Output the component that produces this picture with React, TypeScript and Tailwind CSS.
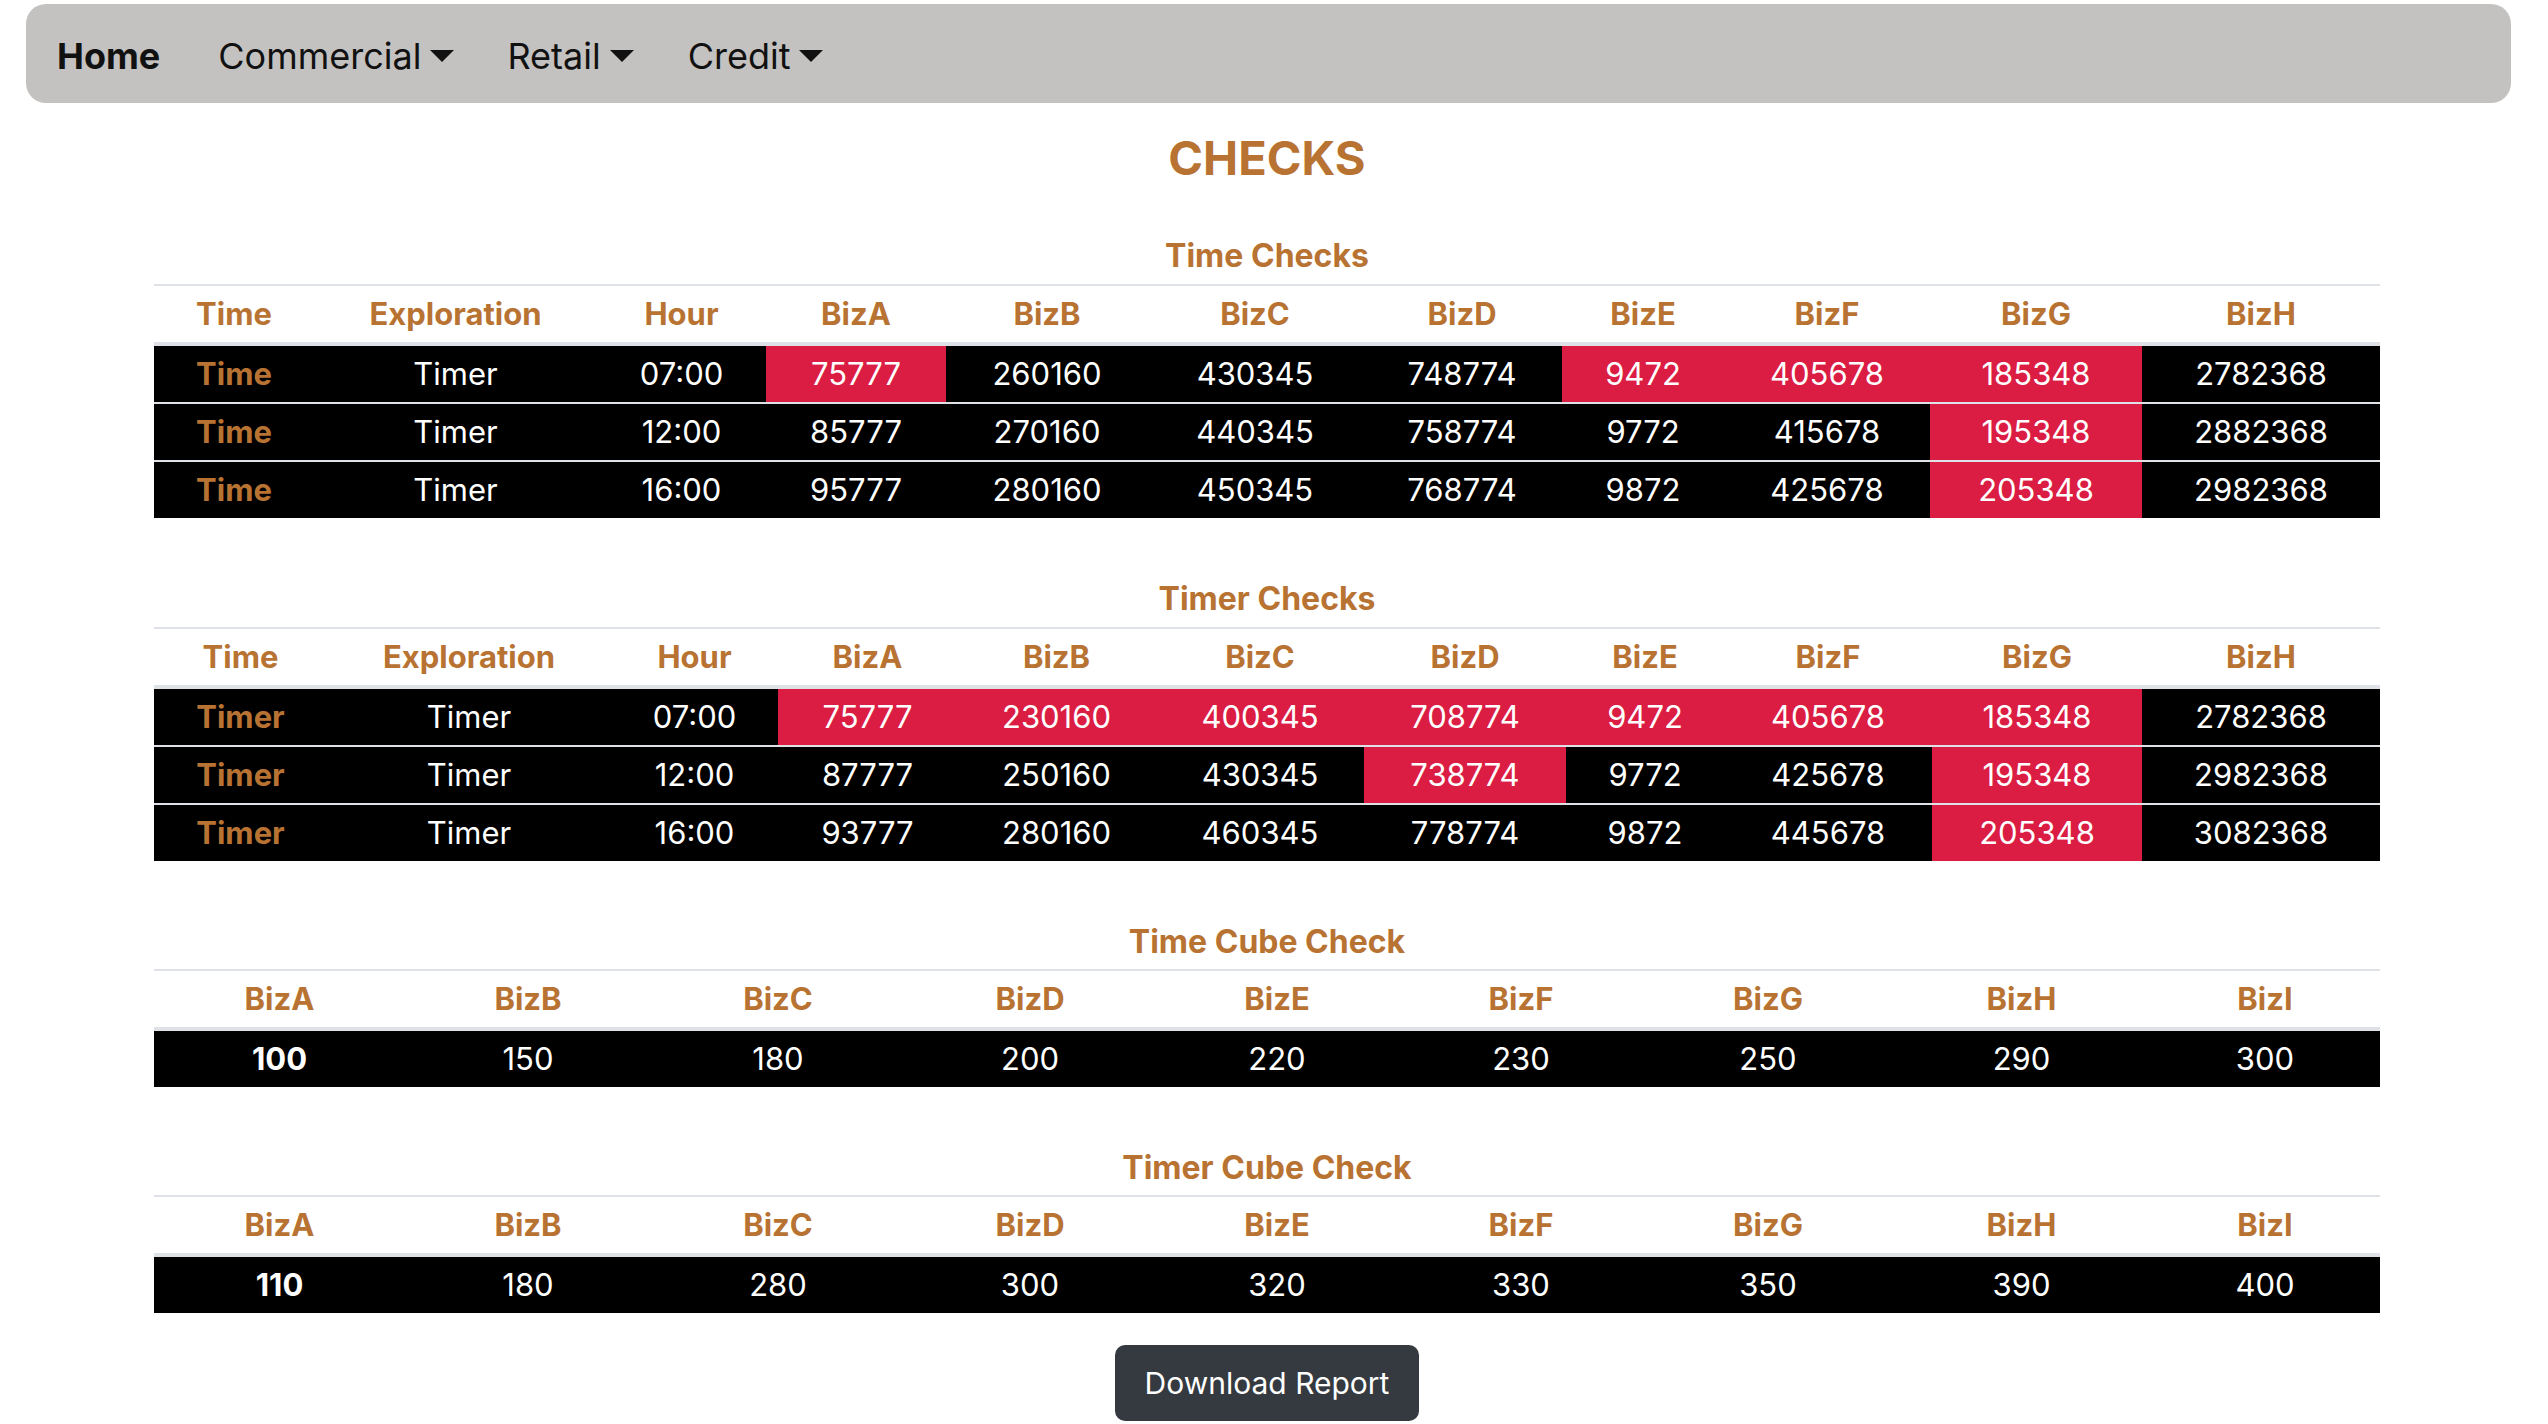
import React from 'react';

const COPPER = 'text-[#b87333]';

type Cell = { v: string; red?: boolean };

const timeChecks: Cell[][] = [
  [{ v: 'Time' }, { v: 'Timer' }, { v: '07:00' }, { v: '75777', red: true }, { v: '260160' }, { v: '430345' }, { v: '748774' }, { v: '9472', red: true }, { v: '405678', red: true }, { v: '185348', red: true }, { v: '2782368' }],
  [{ v: 'Time' }, { v: 'Timer' }, { v: '12:00' }, { v: '85777' }, { v: '270160' }, { v: '440345' }, { v: '758774' }, { v: '9772' }, { v: '415678' }, { v: '195348', red: true }, { v: '2882368' }],
  [{ v: 'Time' }, { v: 'Timer' }, { v: '16:00' }, { v: '95777' }, { v: '280160' }, { v: '450345' }, { v: '768774' }, { v: '9872' }, { v: '425678' }, { v: '205348', red: true }, { v: '2982368' }],
];

const timerChecks: Cell[][] = [
  [{ v: 'Timer' }, { v: 'Timer' }, { v: '07:00' }, { v: '75777', red: true }, { v: '230160', red: true }, { v: '400345', red: true }, { v: '708774', red: true }, { v: '9472', red: true }, { v: '405678', red: true }, { v: '185348', red: true }, { v: '2782368' }],
  [{ v: 'Timer' }, { v: 'Timer' }, { v: '12:00' }, { v: '87777' }, { v: '250160' }, { v: '430345' }, { v: '738774', red: true }, { v: '9772' }, { v: '425678' }, { v: '195348', red: true }, { v: '2982368' }],
  [{ v: 'Timer' }, { v: 'Timer' }, { v: '16:00' }, { v: '93777' }, { v: '280160' }, { v: '460345' }, { v: '778774' }, { v: '9872' }, { v: '445678' }, { v: '205348', red: true }, { v: '3082368' }],
];

const checkHeaders = ['Time', 'Exploration', 'Hour', 'BizA', 'BizB', 'BizC', 'BizD', 'BizE', 'BizF', 'BizG', 'BizH'];
const cubeHeaders = ['BizA', 'BizB', 'BizC', 'BizD', 'BizE', 'BizF', 'BizG', 'BizH', 'BizI'];

const timeCube = ['100', '150', '180', '200', '220', '230', '250', '290', '300'];
const timerCube = ['110', '180', '280', '300', '320', '330', '350', '390', '400'];

const Caret = () => (
  <span className="ml-[9px] mt-[1px] inline-block w-0 h-0 border-t-[12px] border-t-[#111] border-x-[12px] border-x-transparent" />
);

const SectionTitle = ({ children }: { children: React.ReactNode }) => (
  <h5 className={`h-[32px] text-[32px] leading-[32px] font-bold ${COPPER}`}>{children}</h5>
);

const HeaderRow = ({ cols, labels }: { cols: string; labels: string[] }) => (
  <div className={`grid ${cols}`}>
    {labels.map((h) => (
      <div
        key={h}
        className={`h-[62px] border-t-2 border-b-4 border-[#dee2e6] flex items-center justify-center text-[31px] font-bold ${COPPER}`}
      >
        {h}
      </div>
    ))}
  </div>
);

const CheckTable = ({ title, cols, rows }: { title: string; cols: string; rows: Cell[][] }) => (
  <section className="w-full flex flex-col items-center">
    <SectionTitle>{title}</SectionTitle>
    <div className="w-full mt-[12px]">
      <HeaderRow cols={cols} labels={checkHeaders} />
      {rows.map((row, ri) => (
        <div key={ri} className={`grid ${cols} bg-black ${ri > 0 ? 'border-t-2 border-[#dee2e6]' : ''}`}>
          {row.map((c, ci) => (
            <div
              key={ci}
              className={`h-[56px] flex items-center justify-center text-[31px] ${
                ci === 0 ? `font-bold ${COPPER}` : 'text-white'
              } ${c.red ? 'bg-[#db1c43]' : ''}`}
            >
              {c.v}
            </div>
          ))}
        </div>
      ))}
    </div>
  </section>
);

const CubeTable = ({ title, values }: { title: string; values: string[] }) => {
  const cols = 'grid-cols-[251px_246px_254px_250px_244px_244px_250px_257px_230px]';
  return (
    <section className="w-full flex flex-col items-center">
      <SectionTitle>{title}</SectionTitle>
      <div className="w-full mt-[11px]">
        <HeaderRow cols={cols} labels={cubeHeaders} />
        <div className={`grid ${cols} bg-black`}>
          {values.map((v, i) => (
            <div
              key={i}
              className={`h-[56px] flex items-center justify-center text-[31px] text-white ${i === 0 ? 'font-bold' : ''}`}
            >
              {v}
            </div>
          ))}
        </div>
      </div>
    </section>
  );
};

const App = () => {
  return (
    <div className="min-h-screen bg-white font-['Inter','Roboto',sans-serif]">
      {/* Barre de navigation */}
      <nav className="ml-[26px] mt-[4px] w-[2485px] h-[99px] rounded-[20px] bg-[#c3c2c0] flex items-center pt-[4px] text-[36px]">
        <a className="ml-[31px] font-bold text-[#111]">Home</a>
        <a className="ml-[58px] flex items-center text-[#111]">
          Commercial
          <Caret />
        </a>
        <a className="ml-[53px] flex items-center text-[#111]">
          Retail
          <Caret />
        </a>
        <a className="ml-[54px] flex items-center text-[#111]">
          Credit
          <Caret />
        </a>
      </nav>

      <main className="ml-[154px] w-[2226px] flex flex-col items-center">
        <h1 className={`mt-[31px] h-[48px] text-[47px] leading-[48px] font-bold ${COPPER}`}>CHECKS</h1>

        <div className="w-full mt-[58px]">
          <CheckTable
            title="Time Checks"
            cols="grid-cols-[160px_283px_169px_180px_202px_214px_200px_162px_206px_212px_238px]"
            rows={timeChecks}
          />
        </div>

        <div className="w-full mt-[65px]">
          <CheckTable
            title="Timer Checks"
            cols="grid-cols-[173px_284px_167px_179px_199px_208px_202px_158px_208px_210px_238px]"
            rows={timerChecks}
          />
        </div>

        <div className="w-full mt-[65px]">
          <CubeTable title="Time Cube Check" values={timeCube} />
        </div>

        <div className="w-full mt-[65px]">
          <CubeTable title="Timer Cube Check" values={timerCube} />
        </div>

        <button className="mt-[32px] h-[76px] w-[304px] rounded-[10px] bg-[#343a40] text-white text-[30px] flex items-center justify-center">
          Download Report
        </button>
      </main>
    </div>
  );
};

export default App;
